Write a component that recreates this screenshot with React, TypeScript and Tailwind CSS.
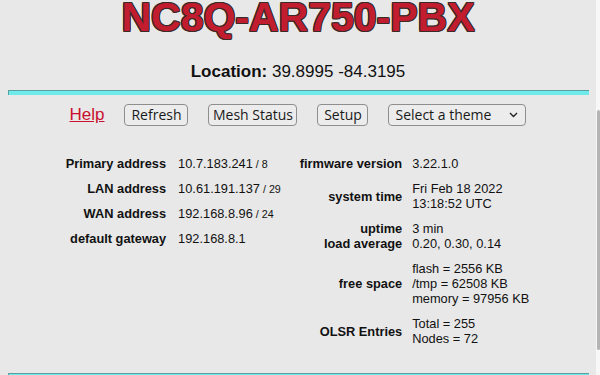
import React from "react";

const netRows = [
  { label: "Primary address", value: "10.7.183.241", mask: "/ 8" },
  { label: "LAN address", value: "10.61.191.137", mask: "/ 29" },
  { label: "WAN address", value: "192.168.8.96", mask: "/ 24" },
  { label: "default gateway", value: "192.168.8.1", mask: "" },
];

const sysRows = [
  { label: ["firmware version"], value: ["3.22.1.0"] },
  { label: ["system time"], value: ["Fri Feb 18 2022", "13:18:52 UTC"] },
  { label: ["uptime", "load average"], value: ["3 min", "0.20, 0.30, 0.14"] },
  { label: ["free space"], value: ["flash = 2556 KB", "/tmp = 62508 KB", "memory = 97956 KB"] },
  { label: ["OLSR Entries"], value: ["Total = 255", "Nodes = 72"] },
];

function CyanBar() {
  return (
    <div className="ml-[8px] mr-[7px] h-[5px] border-t border-l border-[#5a9e9e] bg-[#6eeaea]" />
  );
}

function NavButton({ label, width }: { label: string; width: string }) {
  return (
    <button
      className={`${width} h-[22px] rounded-[4px] border border-[#8e8e8e] bg-[#ececec] text-center text-[14px] leading-[20px] text-[#1a1a1a]`}
    >
      {label}
    </button>
  );
}

function Lines({ items }: { items: string[] }) {
  return (
    <>
      {items.map((t) => (
        <div key={t}>{t}</div>
      ))}
    </>
  );
}

export default function App() {
  return (
    <div className="flex h-[375px] w-full overflow-hidden">
      <div className="w-[596px] bg-[#e8e8e8] font-['Liberation_Sans',Arial,sans-serif] text-[#111]">
        <h1 className="-mt-[4px] text-center text-[41px] font-bold leading-[42px] text-[#c11d2e] [text-shadow:-1px_-1px_0_#3a2a2a,1px_-1px_0_#3a2a2a,-1px_1px_0_#3a2a2a,1px_1px_0_#3a2a2a,0_1px_0_#3a2a2a,1px_0_0_#3a2a2a,-1px_0_0_#3a2a2a,0_-1px_0_#3a2a2a]">
          NC8Q-AR750-PBX
        </h1>

        <p className="mt-[24px] text-center text-[17px] leading-[20px]">
          <span className="font-bold">Location:</span> 39.8995 -84.3195
        </p>

        <div className="mt-[8px]">
          <CyanBar />
        </div>

        <div className="mt-[9px] flex h-[22px] items-center justify-center gap-[20px] font-['Open_Sans',sans-serif]">
          <a
            href="#"
            className="font-['Liberation_Sans',Arial,sans-serif] text-[17px] leading-[20px] text-[#c8102e] underline"
          >
            Help
          </a>
          <NavButton label="Refresh" width="w-[64px]" />
          <NavButton label="Mesh Status" width="w-[89px]" />
          <NavButton label="Setup" width="w-[51px]" />
          <button className="flex h-[22px] w-[138px] items-center justify-between rounded-[4px] border border-[#8e8e8e] bg-[#ececec] pl-[6px] pr-[6px] text-[14px] leading-[20px] text-[#1a1a1a]">
            <span>Select a theme</span>
            <svg width="9" height="6" viewBox="0 0 9 6" fill="none" className="mr-[1px]">
              <path d="M1 1l3.5 3.5L8 1" stroke="#222" strokeWidth="1.4" />
            </svg>
          </button>
        </div>

        <div className="mt-[25px] flex items-start justify-center gap-[8px] text-[12.8px] leading-[15px]">
          <table className="border-collapse">
            <tbody>
              {netRows.map((r) => (
                <tr key={r.label}>
                  <th className="h-[25px] py-[5px] pl-[6px] pr-[6px] text-right align-middle font-bold">{r.label}</th>
                  <td className="h-[25px] py-[5px] pl-[6px] pr-[6px] align-middle whitespace-nowrap">
                    {r.value}
                    {r.mask && <span className="text-[10.7px] leading-none"> {r.mask}</span>}
                  </td>
                </tr>
              ))}
            </tbody>
          </table>

          <table className="border-collapse">
            <tbody>
              {sysRows.map((r) => (
                <tr key={r.label[0]}>
                  <th className="py-[5px] pl-[5px] pr-[5px] text-right align-middle font-bold whitespace-nowrap">
                    <Lines items={r.label} />
                  </th>
                  <td className="py-[5px] pl-[5px] pr-[7px] align-middle whitespace-nowrap">
                    <Lines items={r.value} />
                  </td>
                </tr>
              ))}
            </tbody>
          </table>
        </div>

        <div className="mt-[22px]">
          <CyanBar />
        </div>
      </div>

      {/* scrollbar strip */}
      <div className="w-[4px] bg-[#f7f7f7]">
        <div className="ml-[1px] mt-[110px] h-[240px] w-[3px] rounded-full bg-[#b4b4b4]" />
      </div>
    </div>
  );
}
